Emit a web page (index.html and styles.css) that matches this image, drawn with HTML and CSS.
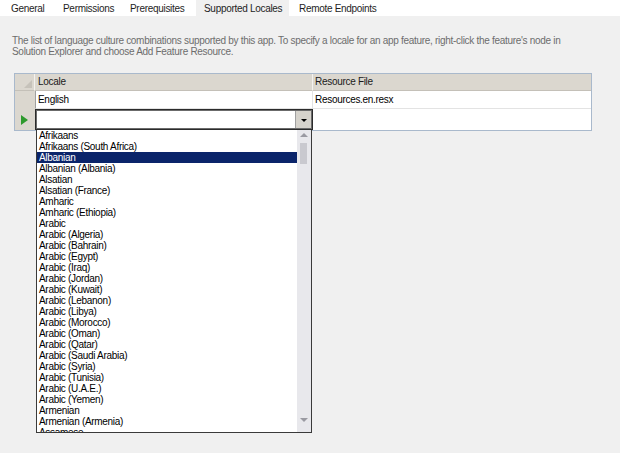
FILE: index.html
```html
<!DOCTYPE html>
<html>
<head>
<meta charset="utf-8">
<link rel="stylesheet" href="styles.css">
</head>
<body>
<div class="tabs">
  <div class="tab t1">General</div>
  <div class="tab t2">Permissions</div>
  <div class="tab t3">Prerequisites</div>
  <div class="tab t4 active">Supported Locales</div>
  <div class="tab t5">Remote Endpoints</div>
</div>
<p class="desc">The list of language culture combinations supported by this app. To specify a locale for an app feature, right-click the feature's node in<br>Solution Explorer and choose Add Feature Resource.</p>
<div class="gridwrap">
  <div class="grid">
    <div class="hcell corner"><span class="sortglyph"></span></div>
    <div class="hcell">Locale</div>
    <div class="hcell last">Resource File</div>

    <div class="rowhead"></div>
    <div class="cell">English</div>
    <div class="cell last">Resources.en.resx</div>

    <div class="rowhead current"><span class="arrow"></span></div>
    <div class="cell editing">
      <div class="combo">
        <div class="combo-input"></div>
        <div class="combo-btn"><span class="down"></span></div>
      </div>
    </div>
    <div class="cell last noline"></div>
  </div>

  <div class="popup">
    <ul class="list">
      <li>Afrikaans</li>
      <li>Afrikaans (South Africa)</li>
      <li class="sel">Albanian</li>
      <li>Albanian (Albania)</li>
      <li>Alsatian</li>
      <li>Alsatian (France)</li>
      <li>Amharic</li>
      <li>Amharic (Ethiopia)</li>
      <li>Arabic</li>
      <li>Arabic (Algeria)</li>
      <li>Arabic (Bahrain)</li>
      <li>Arabic (Egypt)</li>
      <li>Arabic (Iraq)</li>
      <li>Arabic (Jordan)</li>
      <li>Arabic (Kuwait)</li>
      <li>Arabic (Lebanon)</li>
      <li>Arabic (Libya)</li>
      <li>Arabic (Morocco)</li>
      <li>Arabic (Oman)</li>
      <li>Arabic (Qatar)</li>
      <li>Arabic (Saudi Arabia)</li>
      <li>Arabic (Syria)</li>
      <li>Arabic (Tunisia)</li>
      <li>Arabic (U.A.E.)</li>
      <li>Arabic (Yemen)</li>
      <li>Armenian</li>
      <li>Armenian (Armenia)</li>
      <li>Assamese</li>
    </ul>
    <div class="scrollbar">
      <span class="sb-up"></span>
      <span class="sb-thumb"></span>
      <span class="sb-down"></span>
    </div>
  </div>
</div>
</body>
</html>
```
FILE: styles.css
```css
html, body {
  margin: 0;
  padding: 0;
}
body {
  background: #f0f0f0;
  font-family: "Liberation Sans", Arial, sans-serif;
  font-size: 10px;
  letter-spacing: -0.3px;
  color: #000;
  width: 620px;
  height: 453px;
  overflow: hidden;
}
.tabs {
  display: flex;
  background: #ffffff;
  height: 16px;
}
.tab {
  height: 16px;
  line-height: 17px;
  color: #1e1e1e;
  box-sizing: border-box;
}
.t1 { width: 55px; padding-left: 11px; }
.t2 { width: 67px; padding-left: 8px; }
.t3 { width: 74px; padding-left: 8px; }
.t4 { width: 93px; padding-left: 8px; }
.t5 { padding-left: 10px; }
.tab.active {
  background: #f0f0f0;
}
.desc {
  margin: 19px 0 0 12px;
  line-height: 11px;
  color: #6d6d6d;
}
.gridwrap {
  position: relative;
  margin: 16px 0 0 14px;
  width: 578px;
}
.grid {
  display: grid;
  grid-template-columns: 20px 278px 1fr;
  grid-template-rows: 17px 18px 21px;
  border: 1px solid #a9b9cc;
  background: #ffffff;
}
.hcell {
  background: #dbd7cf;
  border-bottom: 1px solid #c4c0b8;
  border-right: 1px solid #f4f2ee;
  padding-left: 3px;
  line-height: 16px;
  color: #1a1a1a;
  box-sizing: border-box;
}
.hcell.last { border-right: none; padding-left: 2px; }
.hcell.corner {
  padding: 0;
  position: relative;
}
.sortglyph {
  position: absolute;
  right: 2px;
  bottom: 2px;
  width: 0;
  height: 0;
  border-left: 8px solid transparent;
  border-bottom: 8px solid #c6c2ba;
}
.rowhead {
  background: #dbd7cf;
  border-right: 1px solid #dbd7cf;
  position: relative;
}
.arrow {
  position: absolute;
  left: 6px;
  top: 6px;
  width: 0;
  height: 0;
  border-top: 5px solid transparent;
  border-bottom: 5px solid transparent;
  border-left: 7px solid #2e9a2e;
}
.cell {
  border-bottom: 1px solid #e3e3e3;
  border-right: 1px solid #e3e3e3;
  border-left: 1px solid #a0a0a0;
  padding-left: 2px;
  line-height: 18px;
  box-sizing: border-box;
  background: #fff;
}
.cell.last { border-right: none; border-left: none; padding-left: 2px; }
.cell.noline { border-bottom: none; }
.cell.editing {
  padding: 0;
  border: none;
}
.combo {
  display: flex;
  height: 21px;
  box-sizing: border-box;
  border: 1px solid #2b2b2b;
  box-shadow: inset 0 0 0 1px #6b6b6b;
  background: #fff;
  padding: 1px;
}
.combo-input {
  flex: 1;
}
.combo-btn {
  width: 15px;
  background: #d6d3cc;
  border-left: 1px solid #a0a0a0;
  display: flex;
  align-items: center;
  justify-content: center;
}
.down {
  width: 0;
  height: 0;
  border-left: 3px solid transparent;
  border-right: 3px solid transparent;
  border-top: 3px solid #000;
  margin-top: 1px;
}
.popup {
  position: absolute;
  left: 22px;
  top: 57px;
  width: 276px;
  height: 303px;
  box-sizing: border-box;
  border: 1px solid #3a3a3a;
  border-top: none;
  background: #ffffff;
  display: flex;
  overflow: hidden;
}
.list {
  list-style: none;
  margin: 0;
  padding: 0;
  flex: 1;
  overflow: hidden;
}
.list li {
  height: 11px;
  line-height: 11px;
  padding-left: 2px;
  white-space: nowrap;
}
.list li.sel {
  background: #0a246a;
  color: #ffffff;
}
.scrollbar {
  width: 14px;
  background: #e8e8ec;
  position: relative;
}
.sb-up {
  position: absolute;
  left: 3px;
  top: 3px;
  width: 0;
  height: 0;
  border-left: 4px solid transparent;
  border-right: 4px solid transparent;
  border-bottom: 4px solid #9a9aa2;
}
.sb-thumb {
  position: absolute;
  left: 3px;
  top: 13px;
  width: 7px;
  height: 21px;
  background: #c9c9cf;
}
.sb-down {
  position: absolute;
  left: 3px;
  bottom: 10px;
  width: 0;
  height: 0;
  border-left: 4px solid transparent;
  border-right: 4px solid transparent;
  border-top: 4px solid #9a9aa2;
}
```
